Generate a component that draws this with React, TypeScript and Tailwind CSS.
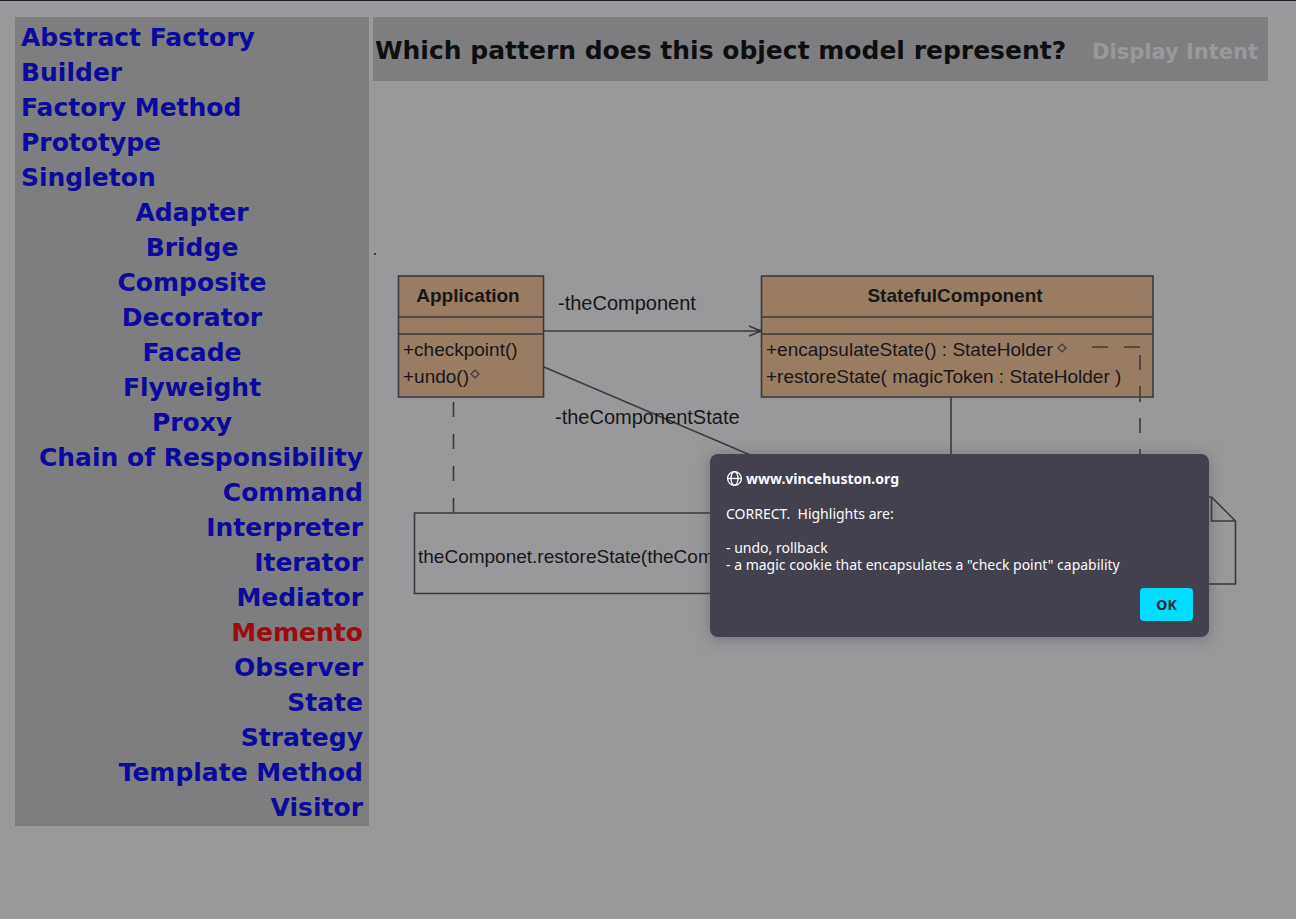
const creational = ['Abstract Factory', 'Builder', 'Factory Method', 'Prototype', 'Singleton'];
const structural = ['Adapter', 'Bridge', 'Composite', 'Decorator', 'Facade', 'Flyweight', 'Proxy'];
const behavioral = [
  'Chain of Responsibility', 'Command', 'Interpreter', 'Iterator', 'Mediator', 'Memento',
  'Observer', 'State', 'Strategy', 'Template Method', 'Visitor',
];

function PatternList({ items, align }: { items: string[]; align: string }) {
  return (
    <ul className={align}>
      {items.map((name) => (
        <li key={name} className="leading-[35px]">
          <a href="#" className={name === 'Memento' ? 'text-[#9c0b0e]' : 'text-[#0b0a9c]'}>
            {name}
          </a>
        </li>
      ))}
    </ul>
  );
}

function ObjectModel() {
  return (
    <svg
      viewBox="0 0 895 360"
      className="mt-[172px] w-full"
      fill="none"
      stroke="#3a3a3e"
      strokeWidth="1.6"
      fontFamily="'Liberation Sans', Arial, sans-serif"
      fontSize="19"
      fontWeight="normal"
      role="img"
      aria-label="Object model"
    >
      <rect x="1" y="0" width="2" height="2" fill="#1d4a22" stroke="none" />
      <g fill="#997d63">
        <rect x="25.5" y="23" width="145" height="121" />
        <rect x="388.5" y="23" width="391.5" height="121" />
      </g>
      <path d="M26 64H171M26 81H171M389 64H780M389 81H780" />
      <path d="M171 78H388M376 73L388 78L376 83" strokeWidth="1.5" />
      <path d="M384 78H388" strokeWidth="3" />
      <path d="M171 114L396 210" strokeWidth="1.4" />
      <path d="M578 144V260" />
      <path d="M80.5 149V260" strokeDasharray="15 17" />
      <path d="M719 94H735M751 94H767M767 102V117M767 133V149M767 165V180M767 196V210" />
      <path d="M98 121L102 117L106 121L102 125Z M685 95L689 91L693 95L689 99Z" strokeWidth="1.2" />
      <path d="M41.5 260H400V340.5H41.5Z" />
      <path d="M560 244H838.5L862.5 268V331H560Z M838.5 244V268H862.5" />
      <g fill="#17171a" stroke="none">
        <text x="95" y="49" textAnchor="middle" fontWeight="bold">Application</text>
        <text x="582" y="49" textAnchor="middle" fontWeight="bold">StatefulComponent</text>
        <text x="30" y="103">+checkpoint()</text>
        <text x="30" y="130">+undo()</text>
        <text x="185" y="57" fontSize="20">-theComponent</text>
        <text x="182" y="171" fontSize="20">-theComponentState</text>
        <text x="393" y="103">+encapsulateState() : StateHolder</text>
        <text x="393" y="130">+restoreState( magicToken : StateHolder )</text>
        <text x="45" y="310">theComponet.restoreState(theCom</text>
      </g>
    </svg>
  );
}

function Globe() {
  return (
    <svg viewBox="0 0 16 16" className="size-4 shrink-0" fill="none" stroke="#fbfbfe" strokeWidth="1.3" aria-hidden="true">
      <circle cx="8.5" cy="7.5" r="6.9" />
      <ellipse cx="8.5" cy="7.5" rx="3.5" ry="6.9" />
      <path d="M1.5 7.5H15.5" />
    </svg>
  );
}

export default function App() {
  return (
    <div className="relative min-h-screen border-t border-[#1c1b22] bg-[#99999b] pt-4 pr-7 pl-[15px] font-['DejaVu_Sans',Verdana,sans-serif] font-bold">
      <div className="flex items-start gap-1">
        <nav aria-label="Patterns" className="w-[354px] shrink-0 bg-[#7e7e80] px-1.5 pt-[3px] pb-px text-[25px]">
          <PatternList items={creational} align="text-left" />
          <PatternList items={structural} align="text-center" />
          <PatternList items={behavioral} align="text-right" />
        </nav>
        <main className="min-w-0 flex-1">
          <header className="flex h-16 items-baseline justify-between bg-[#7e7e80] pt-[15px] pr-2.5 pl-0.5 whitespace-nowrap">
            <h1 className="text-[25px] text-[#0e0e10]">Which pattern does this object model represent?</h1>
            <a href="#" className="text-[21px] text-[#99999b]">Display Intent</a>
          </header>
          <ObjectModel />
        </main>
      </div>

      <div
        role="alertdialog"
        aria-labelledby="dialog-title"
        aria-describedby="dialog-text"
        className="absolute top-[453px] right-[87px] w-[499px] rounded-lg bg-[#42414d] p-4 font-['Noto_Sans',sans-serif] text-sm font-normal text-[#fbfbfe] shadow-[0_2px_14px_rgba(58,57,68,0.4)]"
      >
        <div className="flex items-center gap-1">
          <Globe />
          <h2 id="dialog-title" className="leading-[18px] font-bold">www.vincehuston.org</h2>
        </div>
        <p id="dialog-text" className="mt-[17px] leading-[17px] whitespace-pre-wrap">
          {'CORRECT.  Highlights are:\n\n- undo, rollback\n- a magic cookie that encapsulates a "check point" capability'}
        </p>
        <div className="mt-[15px] flex justify-end">
          <button type="button" className="h-[33px] w-[53px] rounded bg-[#00ddff] font-bold text-[#2b2a33]">OK</button>
        </div>
      </div>
    </div>
  );
}
